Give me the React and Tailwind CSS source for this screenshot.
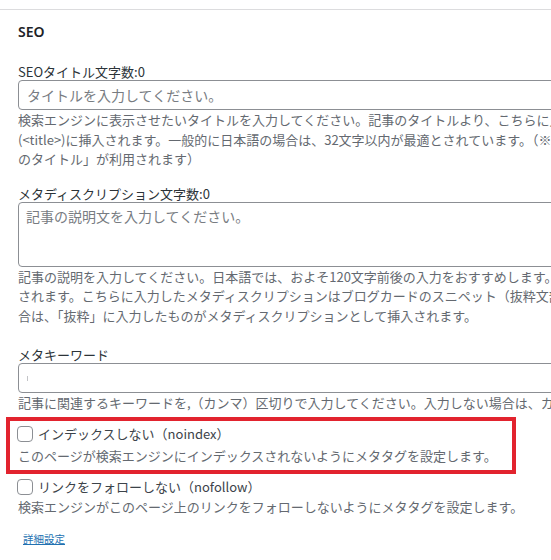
export default function App() {
  const desc = "text-[13px] leading-[19.5px] text-[#646970] whitespace-nowrap";
  const label = "text-[13px] leading-[16px] text-[#2c3338] whitespace-nowrap";
  return (
    <div
      className="w-[551px] h-[560px] overflow-hidden bg-white"
      style={{ fontFamily: '"Noto Sans CJK JP", "Noto Sans", sans-serif' }}
    >
      <div className="h-[10px] border-b border-[#dcdcde] w-full" />
      <div className="pl-[18px] w-[700px]">
        <div
          className="mt-[12px] text-[14px] leading-[20px] font-semibold text-[#1d2327]"
          style={{ fontFamily: '"Noto Sans", "Noto Sans CJK JP", sans-serif' }}
        >
          SEO
        </div>

        <div className={`mt-[22px] ${label}`}>SEOタイトル文字数:0</div>
        <div className="h-[30px] w-[600px] rounded-[4px] border border-[#8c8f94] flex items-center pl-[8px] text-[14px] text-[#787c82] whitespace-nowrap">
          タイトルを入力してください。
        </div>
        <div className={desc}>
          検索エンジンに表示させたいタイトルを入力してください。記事のタイトルより、こちらに入力したテキストが優先的にタイトルタグ
          <br />
          (&lt;title&gt;)に挿入されます。一般的に日本語の場合は、32文字以内が最適とされています。（※ページやインデックスの見出し部分には「記事
          <br />
          のタイトル」が利用されます）
        </div>

        <div className={`mt-[17px] ${label}`}>メタディスクリプション文字数:0</div>
        <div className="h-[65px] w-[600px] rounded-[4px] border border-[#8c8f94] pl-[7px] pt-[3px] text-[14px] leading-[20px] text-[#787c82] whitespace-nowrap">
          記事の説明文を入力してください。
        </div>
        <div className={desc}>
          記事の説明を入力してください。日本語では、およそ120文字前後の入力をおすすめします。スマホではそのうちの約50文字が表示
          <br />
          されます。こちらに入力したメタディスクリプションはブログカードのスニペット（抜粋文部分）にも利用されます。こちらに入力しない場
          <br />
          合は、「抜粋」に入力したものがメタディスクリプションとして挿入されます。
        </div>

        <div className={`mt-[22px] ${label}`}>メタキーワード</div>
        <div className="h-[30px] w-[600px] rounded-[4px] border border-[#8c8f94] flex items-center pl-[8px]">
          <div className="w-[1px] h-[5px] bg-[#c3c4c7]" />
        </div>
        <div className={desc}>
          記事に関連するキーワードを,（カンマ）区切りで入力してください。入力しない場合は、カテゴリ名などから自動で設定されます。
        </div>

        <div className="mt-[4px] ml-[-12px] w-[510px] border-[4px] border-[#e2232e] pl-[7px] pt-[3px] pb-[4px]">
          <div className="flex items-center h-[21px] text-[13px] text-[#3c434a] whitespace-nowrap">
            <div className="w-[16px] h-[16px] rounded-[4px] border border-[#8c8f94] bg-white mr-[5px] shrink-0" />
            インデックスしない（noindex）
          </div>
          <div className="ml-[1px] text-[13px] leading-[21px] text-[#646970] whitespace-nowrap">
            このページが検索エンジンにインデックスされないようにメタタグを設定します。
          </div>
        </div>

        <div className="mt-[4px] flex items-center h-[19px] text-[13px] text-[#3c434a] whitespace-nowrap ml-[-1px]">
          <div className="w-[16px] h-[16px] rounded-[4px] border border-[#8c8f94] bg-white mr-[5px] shrink-0" />
          リンクをフォローしない（nofollow）
        </div>
        <div className="text-[13px] leading-[19px] text-[#646970] whitespace-nowrap">
          検索エンジンがこのページ上のリンクをフォローしないようにメタタグを設定します。
        </div>

        <div className="mt-[15px] ml-[5px] text-[10.5px] leading-[16px]">
          <a href="#" className="text-[#2271b1] underline">
            詳細設定
          </a>
        </div>
      </div>
    </div>
  );
}
